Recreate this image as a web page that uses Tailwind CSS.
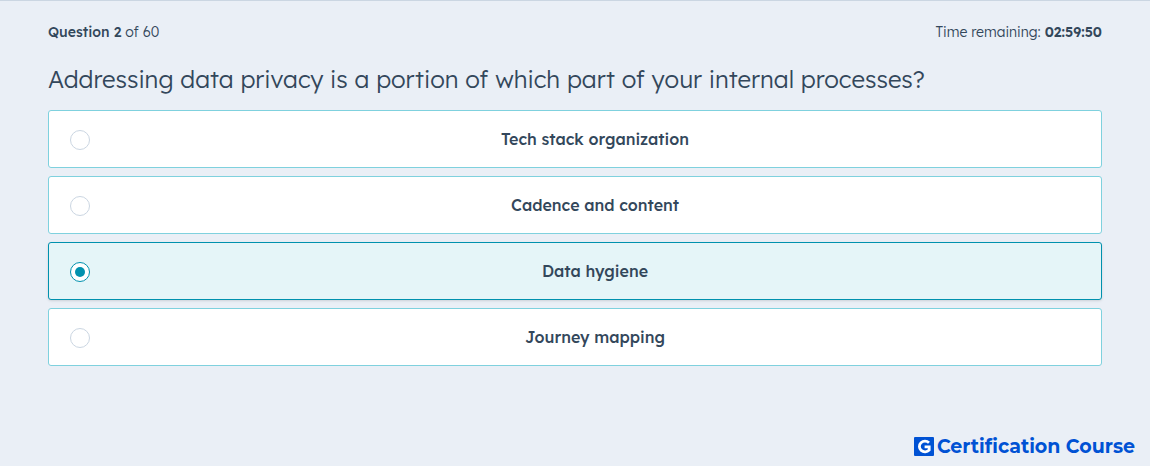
<!DOCTYPE html>
<html lang="en">
<head>
<meta charset="utf-8">
<meta name="viewport" content="width=device-width, initial-scale=1">
<title>Certification Course</title>
<script src="https://cdn.jsdelivr.net/npm/@tailwindcss/browser@4"></script>
</head>
<body class="flex min-h-screen flex-col border-t border-[#cbd6e2] bg-[#eaeff6] font-['Lexend_Deca','Inter',sans-serif] text-[#33475b]">
<main class="px-12 pt-5">
  <div class="flex justify-between text-sm leading-[22px] font-light">
    <p><strong class="font-medium">Question 2</strong> of 60</p>
    <p>Time remaining: <strong class="font-semibold">02:59:50</strong></p>
  </div>
  <form class="pt-[18px]">
    <fieldset class="flex flex-col gap-2">
      <legend class="mb-[13px] text-2xl leading-9 font-light">Addressing data privacy is a portion of which part of your internal processes?</legend>
      <label class="flex h-[58px] items-center rounded-[3px] border border-[#7fd1de] bg-white px-[21px] has-checked:border-[#0091ae] has-checked:bg-[#e5f5f8] has-checked:shadow-sm">
        <input type="radio" name="answer" class="mt-0.5 grid size-5 shrink-0 appearance-none place-content-center rounded-full border border-[#cbd6e2] bg-white checked:border-[#0091ae] checked:before:size-[10px] checked:before:rounded-full checked:before:bg-[#0091ae]">
        <span class="ml-5 flex-1 text-center text-base font-medium">Tech stack organization</span>
      </label>
      <label class="flex h-[58px] items-center rounded-[3px] border border-[#7fd1de] bg-white px-[21px] has-checked:border-[#0091ae] has-checked:bg-[#e5f5f8] has-checked:shadow-sm">
        <input type="radio" name="answer" class="mt-0.5 grid size-5 shrink-0 appearance-none place-content-center rounded-full border border-[#cbd6e2] bg-white checked:border-[#0091ae] checked:before:size-[10px] checked:before:rounded-full checked:before:bg-[#0091ae]">
        <span class="ml-5 flex-1 text-center text-base font-medium">Cadence and content</span>
      </label>
      <label class="flex h-[58px] items-center rounded-[3px] border border-[#7fd1de] bg-white px-[21px] has-checked:border-[#0091ae] has-checked:bg-[#e5f5f8] has-checked:shadow-sm">
        <input type="radio" name="answer" checked class="mt-0.5 grid size-5 shrink-0 appearance-none place-content-center rounded-full border border-[#cbd6e2] bg-white checked:border-[#0091ae] checked:before:size-[10px] checked:before:rounded-full checked:before:bg-[#0091ae]">
        <span class="ml-5 flex-1 text-center text-base font-medium">Data hygiene</span>
      </label>
      <label class="flex h-[58px] items-center rounded-[3px] border border-[#7fd1de] bg-white px-[21px] has-checked:border-[#0091ae] has-checked:bg-[#e5f5f8] has-checked:shadow-sm">
        <input type="radio" name="answer" class="mt-0.5 grid size-5 shrink-0 appearance-none place-content-center rounded-full border border-[#cbd6e2] bg-white checked:border-[#0091ae] checked:before:size-[10px] checked:before:rounded-full checked:before:bg-[#0091ae]">
        <span class="ml-5 flex-1 text-center text-base font-medium">Journey mapping</span>
      </label>
    </fieldset>
  </form>
</main>
<footer class="mt-auto flex items-center justify-end gap-[3px] pr-[15px] pb-2 text-[#0052d4]">
  <svg class="size-5" viewBox="0 0 20 20" aria-hidden="true">
    <rect width="20" height="19" y="0" rx="1" fill="currentColor"/>
    <path d="M15 5.8A5.6 5.3 0 1 0 15.2 13V9.8H10.6" fill="none" stroke="white" stroke-width="2.8"/>
  </svg>
  <span class="font-['Montserrat','Inter',sans-serif] text-[19px] leading-[22px] font-bold">Certification Course</span>
</footer>
</body>
</html>
